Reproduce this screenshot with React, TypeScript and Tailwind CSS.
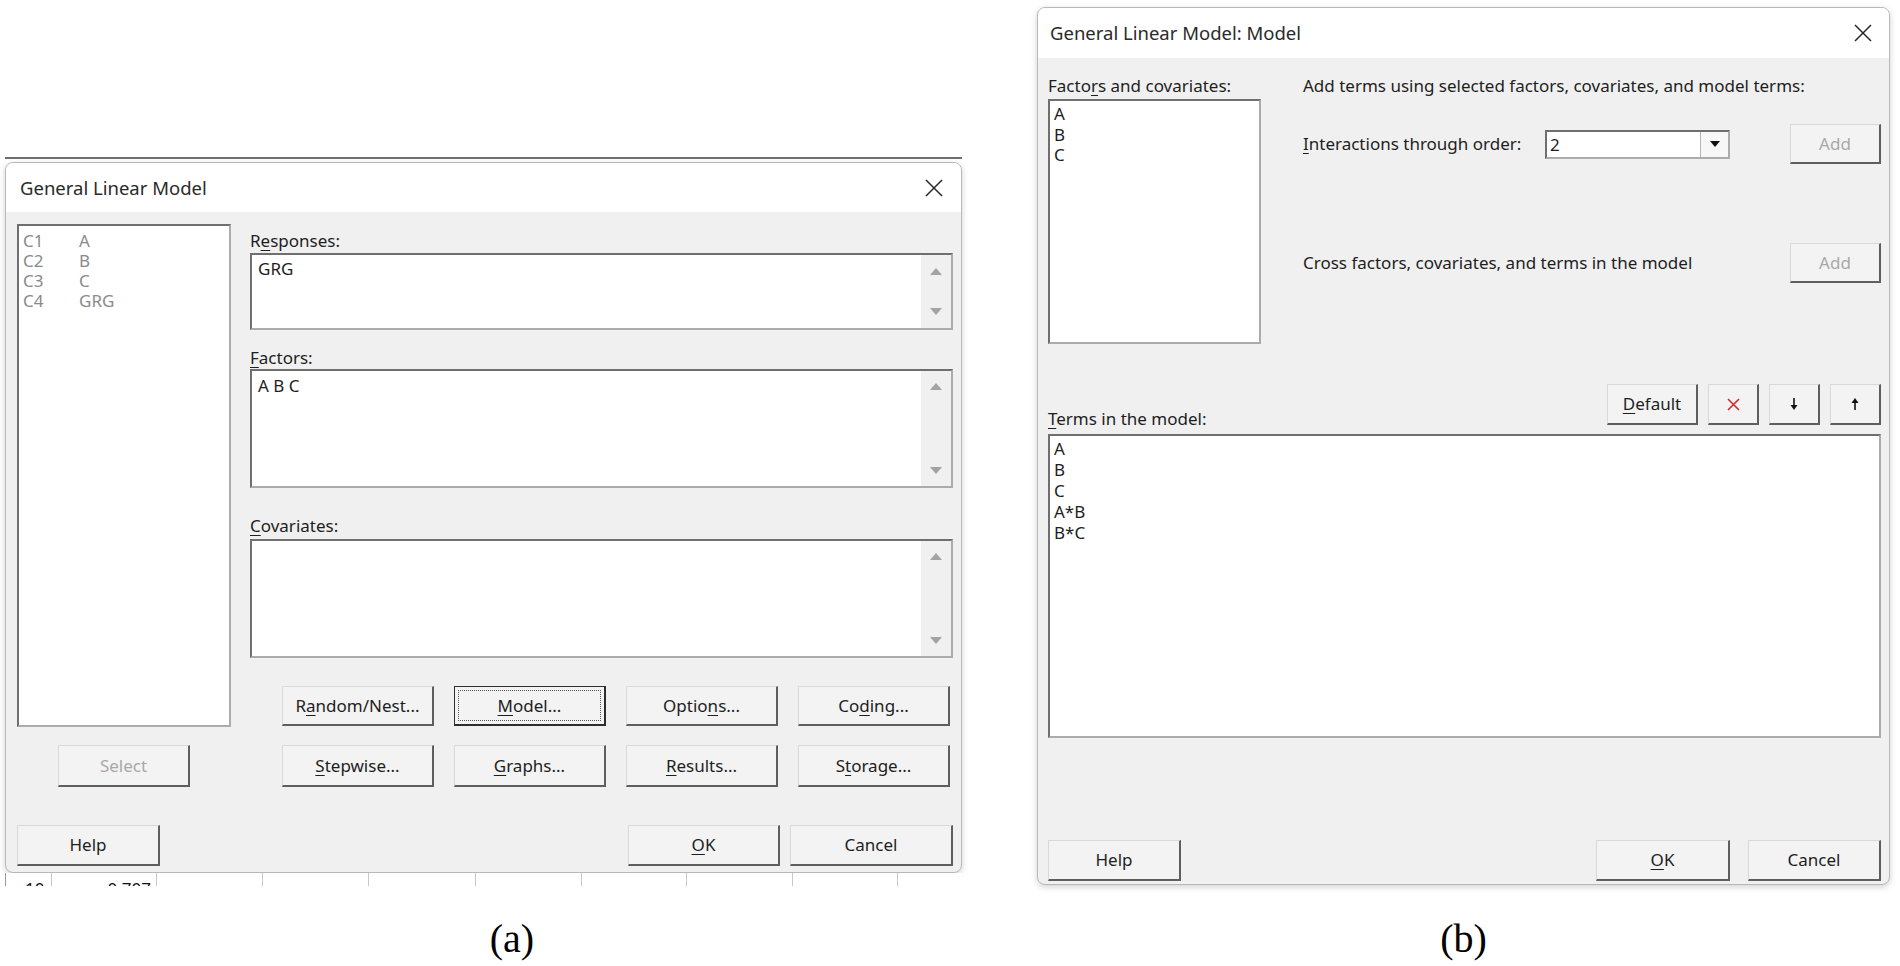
import React from "react";

const U = ({ c }: { c: string }) => (
  <span className="underline decoration-1 underline-offset-[3px]">{c}</span>
);

function Btn({
  cls,
  children,
  disabled = false,
  focus = false,
}: {
  cls: string;
  children: React.ReactNode;
  disabled?: boolean;
  focus?: boolean;
}) {
  if (focus) {
    return (
      <div className={`${cls} flex p-[3px] bg-[#f3f3f3] border border-r-2 border-b-2 border-[#2e2e2e]`}>
        <div className="flex-1 flex items-center justify-center border border-dotted border-[#555] text-[17px] text-[#1e1e1e]">
          {children}
        </div>
      </div>
    );
  }
  return (
    <div
      className={`${cls} flex items-center justify-center bg-[#f3f3f3] border-t border-l border-r-2 border-b-2 border-t-[#d9d9d9] border-l-[#d9d9d9] border-r-[#5e5e5e] border-b-[#5e5e5e] text-[17px] ${
        disabled ? "text-[#a8a8a8]" : "text-[#1e1e1e]"
      }`}
    >
      {children}
    </div>
  );
}

const CloseX = () => (
  <svg width="18" height="18" viewBox="0 0 18 18">
    <path d="M1 1L17 17M17 1L1 17" stroke="#262626" strokeWidth="1.5" />
  </svg>
);

const TriUp = () => (
  <svg width="12" height="7" viewBox="0 0 12 7">
    <path d="M6 0L12 7H0Z" fill="#a3a3a3" />
  </svg>
);
const TriDown = () => (
  <svg width="12" height="7" viewBox="0 0 12 7">
    <path d="M0 0H12L6 7Z" fill="#a3a3a3" />
  </svg>
);

function ScrollCol({ cls }: { cls: string }) {
  return (
    <div className={`w-[30px] bg-[#f0f0f0] flex flex-col items-center justify-between ${cls}`}>
      <TriUp />
      <TriDown />
    </div>
  );
}

const sunken =
  "bg-white border-2 border-t-[#6f6f6f] border-l-[#6f6f6f] border-r-[#ababab] border-b-[#ababab]";

function DialogA() {
  return (
    <div className="h-[711px] rounded-[8px] border border-[#b8b8b8] overflow-hidden flex flex-col bg-[#f0f0f0] shadow-[0_2px_6px_rgba(0,0,0,0.18)]">
      <div className="h-[49px] shrink-0 bg-white flex items-center justify-between pl-[14px] pr-[18px]">
        <span className="text-[18.5px] text-[#2a2a2a]">General Linear Model</span>
        <CloseX />
      </div>
      <div className="flex-1 flex flex-col pl-[11px] pr-[8px]">
        <div className="flex mt-[12px]">
          {/* left column */}
          <div className="w-[214px] flex flex-col">
            <div className={`h-[503px] ${sunken} pt-[5px] pl-[4px] text-[17px] leading-[20px] text-[#8a8a8a]`}>
              {[
                ["C1", "A"],
                ["C2", "B"],
                ["C3", "C"],
                ["C4", "GRG"],
              ].map(([a, b]) => (
                <div key={a} className="flex">
                  <span className="w-[56px]">{a}</span>
                  <span>{b}</span>
                </div>
              ))}
            </div>
            <Btn cls="mt-[18px] ml-[41px] w-[132px] h-[42px]" disabled>
              Select
            </Btn>
          </div>
          {/* right column */}
          <div className="ml-[19px] w-[703px] flex flex-col text-[17px] text-[#1e1e1e]">
            <div className="mt-[6px] h-[22px] leading-[22px]">
              R<U c="e" />sponses:
            </div>
            <div className={`mt-[1px] h-[77px] ${sunken} flex`}>
              <div className="flex-1 pl-[6px] pt-[4px] leading-[20px]">GRG</div>
              <ScrollCol cls="py-[13px]" />
            </div>
            <div className="mt-[17px] h-[22px] leading-[22px]">
              <U c="F" />actors:
            </div>
            <div className={`mt-0 h-[119px] ${sunken} flex`}>
              <div className="flex-1 pl-[6px] pt-[5px] leading-[20px]">A B C</div>
              <ScrollCol cls="py-[12px]" />
            </div>
            <div className="mt-[27px] h-[22px] leading-[22px]">
              <U c="C" />ovariates:
            </div>
            <div className={`mt-[2px] h-[119px] ${sunken} flex`}>
              <div className="flex-1" />
              <ScrollCol cls="py-[12px]" />
            </div>
            <div className="mt-[28px] pl-[32px] grid grid-cols-[152px_152px_152px_152px] gap-x-[20px] gap-y-[19px]">
              <Btn cls="h-[40px]">
                R<U c="a" />ndom/Nest...
              </Btn>
              <Btn cls="h-[40px]" focus>
                <U c="M" />odel...
              </Btn>
              <Btn cls="h-[40px]">
                Optio<U c="n" />s...
              </Btn>
              <Btn cls="h-[40px]">
                Co<U c="d" />ing...
              </Btn>
              <Btn cls="h-[42px]">
                <U c="S" />tepwise...
              </Btn>
              <Btn cls="h-[42px]">
                <U c="G" />raphs...
              </Btn>
              <Btn cls="h-[42px]">
                <U c="R" />esults...
              </Btn>
              <Btn cls="h-[42px]">
                S<U c="t" />orage...
              </Btn>
            </div>
          </div>
        </div>
        <div className="mt-[38px] flex justify-between">
          <Btn cls="w-[143px] h-[41px]">Help</Btn>
          <div className="flex gap-[10px]">
            <Btn cls="w-[152px] h-[41px]">
              <U c="O" />K
            </Btn>
            <Btn cls="w-[163px] h-[41px]">Cancel</Btn>
          </div>
        </div>
      </div>
    </div>
  );
}

const RedX = () => (
  <svg width="13" height="13" viewBox="0 0 13 13">
    <path d="M1 1L12 12M12 1L1 12" stroke="#d12b2b" strokeWidth="1.6" />
  </svg>
);
const DownArrow = () => (
  <svg width="10" height="14" viewBox="0 0 10 14">
    <path d="M5 1V9" stroke="#111" strokeWidth="1.6" />
    <path d="M1.5 8H8.5L5 13Z" fill="#111" />
  </svg>
);
const UpArrow = () => (
  <svg width="10" height="14" viewBox="0 0 10 14">
    <path d="M5 5V13" stroke="#111" strokeWidth="1.6" />
    <path d="M1.5 6H8.5L5 1Z" fill="#111" />
  </svg>
);

function DialogB() {
  return (
    <div className="h-[878px] rounded-[8px] border border-[#b8b8b8] overflow-hidden flex flex-col bg-[#f0f0f0] shadow-[0_2px_6px_rgba(0,0,0,0.18)]">
      <div className="h-[50px] shrink-0 bg-white flex items-center justify-between pl-[12px] pr-[17px]">
        <span className="text-[18.5px] text-[#2a2a2a]">General Linear Model: Model</span>
        <CloseX />
      </div>
      <div className="flex-1 flex flex-col pl-[10px] pr-[8px] text-[17px] text-[#1e1e1e]">
        <div className="mt-[17px] flex">
          <div className="w-[213px] flex flex-col">
            <div className="h-[22px] leading-[22px]">
              Facto<U c="r" />s and covariates:
            </div>
            <div className={`mt-[2px] h-[245px] ${sunken} pl-[4px] pt-[3px] leading-[20.5px]`}>
              <div>A</div>
              <div>B</div>
              <div>C</div>
            </div>
          </div>
          <div className="ml-[42px] flex-1 flex flex-col">
            <div className="h-[22px] leading-[22px]">
              Add terms using selected factors, covariates, and model terms:
            </div>
            <div className="mt-[27px] h-[40px] flex items-center">
              <div className="w-[242px]">
                <U c="I" />nteractions through order:
              </div>
              <div className={`w-[185px] h-[29px] ${sunken} flex`}>
                <div className="flex-1 pl-[3px] leading-[25px]">2</div>
                <div className="w-[28px] border-l border-[#b5b5b5] bg-[#f7f7f7] flex items-center justify-center">
                  <svg width="10" height="6" viewBox="0 0 10 6">
                    <path d="M0 0H10L5 6Z" fill="#111" />
                  </svg>
                </div>
              </div>
              <Btn cls="ml-auto w-[91px] h-[40px]" disabled>
                Add
              </Btn>
            </div>
            <div className="mt-[79px] h-[40px] flex items-center">
              <div>Cross factors, covariates, and terms in the model</div>
              <Btn cls="ml-auto w-[91px] h-[40px]" disabled>
                Add
              </Btn>
            </div>
          </div>
        </div>
        <div className="mt-[40px] h-[48px] flex justify-between">
          <div className="self-end h-[22px] leading-[22px] mb-[2px]">
            <U c="T" />erms in the model:
          </div>
          <div className="flex gap-[10px]">
            <Btn cls="w-[91px] h-[41px]">
              <U c="D" />efault
            </Btn>
            <Btn cls="w-[51px] h-[41px]">
              <RedX />
            </Btn>
            <Btn cls="w-[51px] h-[41px]">
              <DownArrow />
            </Btn>
            <Btn cls="w-[51px] h-[41px]">
              <UpArrow />
            </Btn>
          </div>
        </div>
        <div className={`mt-[2px] h-[304px] ${sunken} pl-[4px] pt-[2px] leading-[21px]`}>
          <div>A</div>
          <div>B</div>
          <div>C</div>
          <div>A*B</div>
          <div>B*C</div>
        </div>
        <div className="mt-[102px] flex justify-between">
          <Btn cls="w-[133px] h-[41px]">Help</Btn>
          <div className="flex gap-[18px]">
            <Btn cls="w-[134px] h-[41px]">
              <U c="O" />K
            </Btn>
            <Btn cls="w-[133px] h-[41px]">Cancel</Btn>
          </div>
        </div>
      </div>
    </div>
  );
}

export default function App() {
  return (
    <div className="w-[1900px] h-[966px] bg-white flex items-start overflow-hidden font-['Noto_Sans',sans-serif]">
      <div className="ml-[5px] w-[957px] flex flex-col">
        <div className="h-[157px]" />
        <div className="h-[2px] bg-[#6e6e6e]" />
        <div className="h-[3px]" />
        <DialogA />
        <div className="h-[13px] overflow-hidden flex bg-white border-l border-[#9a9a9a] text-[17px] leading-[17px] text-[#111]">
          <div className="w-[46px] shrink-0 border-r border-[#c8c8c8] pt-[7px] pl-[19px]">10</div>
          <div className="w-[105px] shrink-0 border-r border-[#c8c8c8] pt-[7px] pr-[5px] text-right">0.707</div>
          <div className="w-[106px] shrink-0 border-r border-[#c8c8c8]" />
          <div className="w-[106px] shrink-0 border-r border-[#c8c8c8]" />
          <div className="w-[107px] shrink-0 border-r border-[#c8c8c8]" />
          <div className="w-[106px] shrink-0 border-r border-[#c8c8c8]" />
          <div className="w-[105px] shrink-0 border-r border-[#c8c8c8]" />
          <div className="w-[106px] shrink-0 border-r border-[#c8c8c8]" />
          <div className="w-[105px] shrink-0 border-r border-[#c8c8c8]" />
        </div>
        <div className="mt-[33px] pl-[57px] text-center font-['Liberation_Serif',serif] text-[40px] leading-[40px] text-black">
          (a)
        </div>
      </div>
      <div className="ml-[75px] w-[853px] flex flex-col pt-[7px]">
        <DialogB />
        <div className="mt-[34px] text-center font-['Liberation_Serif',serif] text-[40px] leading-[40px] text-black">
          (b)
        </div>
      </div>
    </div>
  );
}
